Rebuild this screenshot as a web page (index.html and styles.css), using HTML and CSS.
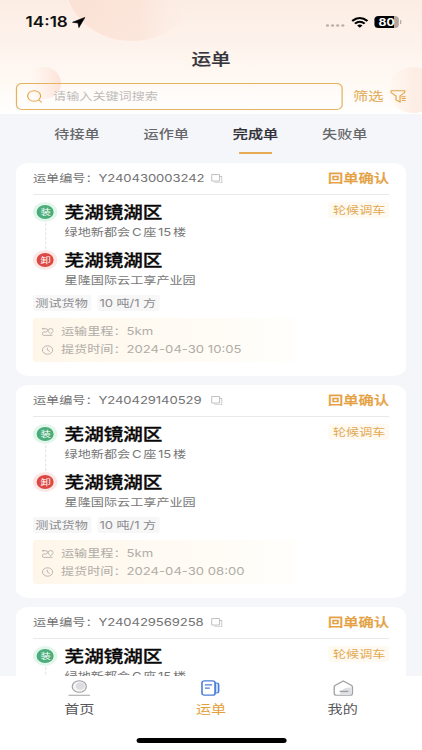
FILE: index.html
```
<!DOCTYPE html>
<html lang="zh-CN">
<head>
<meta charset="utf-8">
<title>运单</title>
<link rel="stylesheet" href="styles.css">
</head>
<body>
<svg width="0" height="0" class="defs">
  <symbol id="copy" viewBox="0 0 10 10"><path d="M.6.6h6.8v6.8H.6zM9.4 2.6v6.8H2.8M7.6 2.6h1.8" fill="none" stroke="#b4b4b4" stroke-width=".8"/></symbol>
  <symbol id="route" viewBox="0 0 10 10"><path d="M.4 1.7h3.2q1.5 0 1.5 1.5T3.6 5H2Q.6 5 .6 6.7T2 8.4h7M1.4.8v1.8M7.6 7C6 5.4 5.6 4.5 5.6 3.5a1.9 1.9 0 0 1 3.9 0c0 1-.4 1.9-1.9 3.5z" fill="none" stroke="#b4b0aa" stroke-width=".8"/></symbol>
  <symbol id="clock" viewBox="0 0 10 10"><circle cx="5" cy="5" r="4.2" fill="none" stroke="#b4b0aa" stroke-width=".8"/><path d="M4.8 2.7V5l2 1.5" fill="none" stroke="#b4b0aa" stroke-width=".8"/></symbol>
</svg>
<div class="screen">
  <header class="header">
    <svg class="decor" viewBox="0 0 422 114" preserveAspectRatio="none">
      <defs>
        <linearGradient id="g1" x1="0" x2="1"><stop offset="0" stop-color="#fadccf" stop-opacity=".7"/><stop offset=".55" stop-color="#fbe0d3" stop-opacity=".65"/><stop offset="1" stop-color="#fdeee5" stop-opacity="0"/></linearGradient>
        <linearGradient id="g2" x1="0" x2="1"><stop offset="0" stop-color="#fff0e8" stop-opacity="0"/><stop offset="1" stop-color="#fcdfd3" stop-opacity=".9"/></linearGradient>
        <linearGradient id="g3" x1="0" x2="1"><stop offset="0" stop-color="#fff3eb" stop-opacity=".3"/><stop offset=".5" stop-color="#fdeee5"/></linearGradient>
      </defs>
      <ellipse cx="132" cy="-16" rx="66" ry="57" fill="url(#g1)"/>
      <ellipse cx="44" cy="83" rx="17" ry="16" fill="url(#g2)"/>
      <ellipse cx="413" cy="90" rx="25" ry="23" fill="url(#g3)"/>
    </svg>
    <div class="status">
      <div class="time">14:18 <svg width="11" height="11" viewBox="0 0 11 11"><path d="M10.6.4.5 5.3 5 6l.7 4.6z" stroke="#000" stroke-width=".6" stroke-linejoin="round"/></svg></div>
      <div class="signals">
        <svg class="dots" width="16" height="3" viewBox="0 0 16 3"><g fill="#b9afab"><circle cx="1.5" cy="1.5" r="1.3"/><circle cx="5.7" cy="1.5" r="1.3"/><circle cx="9.9" cy="1.5" r="1.3"/><circle cx="14.1" cy="1.5" r="1.3"/></g></svg>
        <svg width="14" height="11" viewBox="0 0 14 11"><g fill="none" stroke="#000" stroke-width="1.9"><path d="M.7 4Q7-1.9 13.3 4M3 6.6q4-3.7 8 0"/></g><path d="M4.8 8.5q2.2-1.8 4.4 0L7 10.8z"/></svg>
        <div class="battery">80</div>
      </div>
    </div>
    <h1>运单</h1>
    <div class="search-row">
      <div class="search">
        <svg width="13" height="13" viewBox="0 0 13 13"><g fill="none" stroke="#e3a548" stroke-width="1"><circle cx="6" cy="6" r="5.3"/><path d="m9.8 10 2.4 2.3"/></g></svg>
        <span>请输入关键词搜索</span>
      </div>
      <div class="filter"><span>筛选</span>
        <svg width="13" height="13" viewBox="0 0 13 13"><path d="M.6.7h11.2v1.8L8 6v6L4.7 10V6L.6 2.6zM9 6.7h3.6M9.4 8.6h3.2M9.4 10.5h3.2" fill="none" stroke="#e3a548"/></svg>
      </div>
    </div>
  </header>
  <nav class="tabs"><span>待接单</span><span>运作单</span><span class="active">完成单</span><span>失败单</span></nav>
  <main class="list">
    <article class="card">
      <div class="head"><span class="number">运单编号：<i>Y240430003242</i></span><svg class="copy"><use href="#copy"/></svg><b>回单确认</b></div>
      <div class="route">
        <div class="stop"><span class="dot load">装</span><div><h2>芜湖镜湖区</h2><p>绿地新都会<i class="gap">C</i>座<i class="gap">15</i>楼</p></div><em>轮候调车</em></div>
        <div class="stop"><span class="dot unload">卸</span><div><h2>芜湖镜湖区</h2><p>星隆国际云工享产业园</p></div></div>
      </div>
      <div class="tags"><span>测试货物</span><span>10<i class="gap"></i>吨/1<i class="gap"></i>方</span></div>
      <div class="info"><div><svg><use href="#route"/></svg>运输里程：<i>5km</i></div><div><svg><use href="#clock"/></svg>提货时间：<i>2024-04-30 10:05</i></div></div>
    </article>
    <article class="card">
      <div class="head"><span class="number">运单编号：<i>Y240429140529</i></span><svg class="copy"><use href="#copy"/></svg><b>回单确认</b></div>
      <div class="route">
        <div class="stop"><span class="dot load">装</span><div><h2>芜湖镜湖区</h2><p>绿地新都会<i class="gap">C</i>座<i class="gap">15</i>楼</p></div><em>轮候调车</em></div>
        <div class="stop"><span class="dot unload">卸</span><div><h2>芜湖镜湖区</h2><p>星隆国际云工享产业园</p></div></div>
      </div>
      <div class="tags"><span>测试货物</span><span>10<i class="gap"></i>吨/1<i class="gap"></i>方</span></div>
      <div class="info"><div><svg><use href="#route"/></svg>运输里程：<i>5km</i></div><div><svg><use href="#clock"/></svg>提货时间：<i>2024-04-30 08:00</i></div></div>
    </article>
    <article class="card">
      <div class="head"><span class="number">运单编号：<i>Y240429569258</i></span><svg class="copy"><use href="#copy"/></svg><b>回单确认</b></div>
      <div class="route">
        <div class="stop"><span class="dot load">装</span><div><h2>芜湖镜湖区</h2><p>绿地新都会<i class="gap">C</i>座<i class="gap">15</i>楼</p></div><em>轮候调车</em></div>
      </div>
    </article>
  </main>
  <footer class="bottom">
    <div class="menu">
      <div><svg width="18" height="18" viewBox="0 0 18 18"><circle cx="9" cy="7.5" r="5.8" fill="#f4f4f4" stroke="#a2a2a6"/><circle cx="9.8" cy="7.1" r="3.7" fill="#dcdde0"/><path d="M0 16.3h18" stroke="#a2a2a6"/></svg><span>首页</span></div>
      <div class="active"><svg width="18" height="18" viewBox="0 0 18 18"><path d="M12.3 4h1.5q1.5 0 1.5 1.5v7q0 1.5-1.5 1.5h-1.5z" fill="#c9dcfa" stroke="#4a7dd8" stroke-width="1.2"/><rect x="1.6" y="1.8" width="10.7" height="14.4" rx="2" fill="#fff" stroke="#4a7dd8" stroke-width="1.3"/><path d="M4 5.8h6M4 9.1h4" stroke="#4a7dd8" stroke-width="1.2"/></svg><span>运单</span></div>
      <div><svg width="18" height="18" viewBox="0 0 18 18"><path d="M9.5 2 16 6.2q1 .7 1 2v6q0 2-2 2H4q-2 0-2-2v-6q0-1.3 1-2z" fill="#fff" stroke="#a2a2a6" stroke-width="1.1"/><path d="M16.3 8.5q-6-.4-8 3.2L6 15.4h9q1.3 0 1.3-1.3z" fill="#dddfe4"/><path d="M6.5 12.3h7" stroke="#9b9ba0" stroke-width="1.3"/></svg><span>我的</span></div>
    </div>
    <div class="home"></div>
  </footer>
</div>
</body>
</html>
```
FILE: styles.css
```
* { box-sizing: border-box; }
html, body { margin: 0; width: 422px; height: 750px; overflow: hidden; }
/* The screen is laid out at 346px and widened to fill the window. */
.screen {
  width: 346px; height: 750px; overflow: hidden;
  display: flex; flex-direction: column;
  transform: scaleX(1.21965); transform-origin: 0 0;
  background: #f5f6f9; color: #737373;
  font: 10.75px/16px Inter, "Noto Sans CJK SC", sans-serif;
}
.defs { position: absolute; }
i, em { font-style: normal; }
h1, h2, p { margin: 0; }
svg { display: block; flex: none; }

.header {
  position: relative; flex: none; height: 114px;
  background: linear-gradient(#fcede4, #fdf3ec 40%, #fff9f4 72%, #fff);
}
.decor { position: absolute; left: 0; top: 0; width: 346px; height: 114px; }
.status { position: relative; height: 44px; padding: 0 16px 0 21px; display: flex; justify-content: space-between; align-items: center; }
.time { display: flex; align-items: center; gap: 3px; color: #111; font-size: 14px; font-weight: 600; }
.signals { display: flex; align-items: center; gap: 5px; }
.dots { margin-top: 7px; }
.battery {
  position: relative; width: 20px; height: 12px; margin-right: 3px; border-radius: 3.5px;
  background: linear-gradient(90deg, #000 80%, #b0a5a0 80%);
  color: #fff; font-size: 10px; font-weight: 700; line-height: 13px; text-align: center;
}
.battery::after { content: ""; position: absolute; right: -2px; top: 4px; width: 1.2px; height: 4px; border-radius: 1px; background: #b0a5a0; }
h1 { position: relative; height: 30px; font-size: 16px; line-height: 30px; font-weight: 500; text-align: center; color: #34343c; -webkit-text-stroke: .2px; }
.search-row { position: relative; display: flex; margin-top: 8.5px; padding-left: 13px; height: 27px; align-items: center; }
.search { width: 267.5px; height: 27px; display: flex; align-items: center; gap: 8.5px; padding-left: 8px; border: 1.2px solid #e5b25e; border-radius: 5px; color: #bfbcba; }
.search span, .filter span { padding-top: 1px; }
.filter { display: flex; align-items: center; gap: 5px; margin-left: 9px; font-size: 12.5px; color: #e2a951; }

.tabs { flex: none; display: flex; height: 48.5px; padding: 0 26.5px; }
.tabs span { position: relative; width: 73.2px; height: 40px; line-height: 41px; text-align: center; font-size: 12.4px; font-weight: 500; color: #66676b; }
.tabs .active { color: #303138; -webkit-text-stroke: .2px; }
.tabs .active::after { content: ""; position: absolute; left: 23.5px; bottom: 0; width: 26.5px; height: 2px; background: #e8ab55; }

.list { flex: 1; min-height: 0; overflow: hidden; display: flex; flex-direction: column; gap: 8.5px; padding: 0 13px; }
.card { flex: none; height: 213.5px; padding: 0 14px; border-radius: 10px; background: #fff; }
.head { display: flex; align-items: center; height: 32px; padding-top: 1px; border-bottom: 1px solid #e9e9eb; }
.head i { letter-spacing: -.08px; }
.number { width: 146px; white-space: nowrap; }
.copy { width: 9.5px; height: 9.5px; }
.head b { margin-left: auto; font-size: 12.5px; font-weight: 500; color: #e4a041; -webkit-text-stroke: .25px; }
.route { height: 99px; padding-top: 7px; }
.stop { position: relative; display: flex; height: 48px; }
.dot { flex: none; width: 20px; height: 20px; margin: 0 5.6px 0 .4px; border: 3px solid; border-radius: 50%; color: #fff; font-size: 8.5px; line-height: 14px; text-align: center; }
.load { background: #4aad79; border-color: #e2f6eb; }
.unload { background: #dc4943; border-color: #fce7e7; }
.load::after { content: ""; position: absolute; left: 10px; top: 21px; height: 26px; border-left: 1px dashed #eae4e4; }
h2 { height: 21px; font-size: 16px; line-height: 21px; font-weight: 500; color: #080808; -webkit-text-stroke: .35px; }
p { height: 18px; line-height: 20px; color: #777; }
.gap { margin: 0 1.4px; }
.stop em { margin: 0 0 0 auto; height: 16px; padding: 0 3px 0 4px; line-height: 17px; border-radius: 3px; background: #fffaf1; color: #e2a951; }
.tags { display: flex; gap: 4.5px; margin-top: 1px; color: #8c8c8e; }
.tags span { height: 16px; padding: 0 3px 0 2px; line-height: 17px; border-radius: 2px; background: #f7f7f8; }
.info { width: 216px; height: 44px; margin-top: 7px; padding: 5px 7px; border-radius: 3px; background: linear-gradient(90deg, #fef6e9, #fffaf2 45%, #fffefa 95%, #fffefc); color: #b0ada8; }
.info div { display: flex; align-items: center; height: 18px; }
.info svg { width: 10px; height: 10px; margin-right: 6px; }

.bottom { flex: none; height: 74px; background: #fff; }
.menu { display: flex; padding: 3px 11px 0; height: 62px; }
.menu div { flex: 1; display: flex; flex-direction: column; align-items: center; font-size: 12.4px; line-height: 20px; color: #58585c; }
.menu span { margin-top: 3px; }
.menu .active { color: #e2a13d; }
.home { width: 123px; height: 4.5px; margin: 0 auto; border-radius: 3px; background: #000; }
```
